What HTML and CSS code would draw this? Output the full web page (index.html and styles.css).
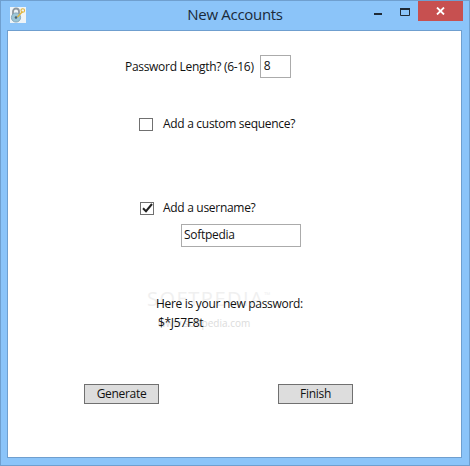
FILE: index.html
```html
<!DOCTYPE html>
<html lang="en">
<head>
<meta charset="utf-8">
<title>New Accounts</title>
<link rel="stylesheet" href="styles.css">
</head>
<body>
<div class="window">
  <header class="titlebar">
    <svg class="app-icon" width="16" height="16" viewBox="0 0 16 16">
      <rect width="16" height="16" fill="#eef4f8"/>
      <path d="M3 8V4.5a3 3 0 0 1 6 0V8" fill="none" stroke="#8d979e" stroke-width="1.8"/>
      <circle cx="6" cy="10.5" r="4.6" fill="#9cc6d8" stroke="#7a9cae" stroke-width=".8"/>
      <circle cx="6" cy="10.5" r="1.3" fill="#4a6472"/>
      <path d="M7.5 10l5-5.5" stroke="#e0b53c" stroke-width="1.4"/>
      <circle cx="12.8" cy="3.5" r="1.8" fill="none" stroke="#e0b53c" stroke-width="1.1"/>
    </svg>
    <h1 class="title">New Accounts</h1>
    <div class="controls">
      <svg class="ctl ctl-min" width="8" height="2" viewBox="0 0 8 2"><rect width="8" height="2" fill="#1f2a36"/></svg>
      <svg class="ctl ctl-max" width="10" height="8" viewBox="0 0 10 8"><path d="M.5 .5h9v7h-9z" fill="none" stroke="#1f2a36"/><path d="M0 1h10" stroke="#1f2a36" stroke-width="2"/></svg>
      <div class="ctl-close">
        <svg width="9" height="8" viewBox="0 0 9 8"><path d="M1 .5l7 7M8 .5l-7 7" stroke="#fff" stroke-width="1.8"/></svg>
      </div>
    </div>
  </header>
  <main class="client">
    <div class="row row-length">
      <label class="text" for="len">Password Length? (6-16)</label>
      <div class="field field-short" id="len">8</div>
    </div>
    <div class="row row-sequence">
      <span class="check"></span>
      <span class="text">Add a custom sequence?</span>
    </div>
    <div class="row row-username">
      <span class="check check-on">
        <svg width="11" height="10" viewBox="0 0 11 10"><path d="M1 5.2l3 3L10 1" fill="none" stroke="#222" stroke-width="2"/></svg>
      </span>
      <span class="text">Add a username?</span>
    </div>
    <div class="row row-name">
      <div class="field field-long">Softpedia</div>
    </div>
    <div class="result">
      <div class="watermark" aria-hidden="true">SOFTPEDIA<sup class="tm">™</sup></div>
      <div class="watermark-url" aria-hidden="true">www.softpedia.com</div>
      <div class="text result-label">Here is your new password:</div>
      <div class="text result-value">$*J57F8t</div>
    </div>
    <div class="actions">
      <button class="btn" type="button">Generate</button>
      <button class="btn" type="button">Finish</button>
    </div>
  </main>
</div>
</body>
</html>
```
FILE: styles.css
```css
* { box-sizing: border-box; }
html, body { margin: 0; padding: 0; background: #fff; }
body {
  font-family: "Open Sans", "Liberation Sans", sans-serif;
  font-size: 12px;
  letter-spacing: -0.3px;
  color: #111;
}
.window {
  width: 470px;
  height: 466px;
  background: #8bc4f9;
  border: 1px solid #6f9fcf;
  display: flex;
  flex-direction: column;
  padding: 0 7px 7px 6px;
}
.titlebar {
  height: 29px;
  flex: none;
  display: flex;
  position: relative;
  align-items: flex-start;
}
.app-icon { margin: 6px 0 0 3px; }
.title {
  position: absolute;
  left: 1px;
  right: 0;
  top: 3px;
  margin: 0;
  text-align: center;
  font-weight: 400;
  font-size: 15px;
  line-height: 20px;
  color: #1a2a3a;
}
.controls {
  margin-left: auto;
  display: flex;
  align-items: flex-start;
  margin-right: -1px;
}
.ctl-min { margin: 12px 18px 0 0; }
.ctl-max { margin: 7px 8px 0 0; }
.ctl-close {
  width: 45px;
  height: 20px;
  background: #c75050;
  display: flex;
  align-items: center;
  justify-content: center;
}
.client {
  flex: 1;
  background: #fff;
  border: 1px solid #6f9fcf;
  position: relative;
  display: flex;
  flex-direction: column;
}
.row { display: flex; align-items: center; }
.text { line-height: 16px; white-space: nowrap; }
.field {
  border: 1px solid #ababab;
  background: #fff;
  height: 23px;
  line-height: 19px;
  padding-left: 3px;
}
.field-short { width: 31px; margin-left: 6px; }
.field-long { width: 120px; padding-left: 2px; }
.row-length { margin: 24px 0 0 117px; }
.row-sequence { margin-top: 38px; margin-left: 131px; }
.row-username { margin-top: 68px; margin-left: 132px; }
.row-name { margin-top: 8px; margin-left: 173px; }
.check {
  width: 14px;
  height: 13px;
  border: 1px solid #707070;
  margin-right: 10px;
  display: flex;
  align-items: center;
  justify-content: center;
}
.row-username .check { margin-right: 9px; }
.result {
  position: relative;
  margin: 49px 0 0 148px;
}
.result-label, .result-value { position: relative; }
.result-value { margin: 3px 0 0 2px; }
.watermark {
  position: absolute;
  left: -9px;
  top: -11px;
  font-size: 20px;
  letter-spacing: 1.5px;
  color: #f0f0f0;
  white-space: nowrap;
}
.tm { font-size: 8px; }
.watermark-url {
  position: absolute;
  left: 2px;
  top: 20px;
  color: #dcdcdc;
  font-size: 10px;
  letter-spacing: 0;
  white-space: nowrap;
}
.actions {
  display: flex;
  gap: 119px;
  margin: 53px 0 0 76px;
}
.btn {
  width: 75px;
  height: 20px;
  padding: 0;
  font: inherit;
  letter-spacing: inherit;
  line-height: 16px;
  color: #111;
  background: #dddddd;
  border: 1px solid #707070;
  border-radius: 0;
}
```
